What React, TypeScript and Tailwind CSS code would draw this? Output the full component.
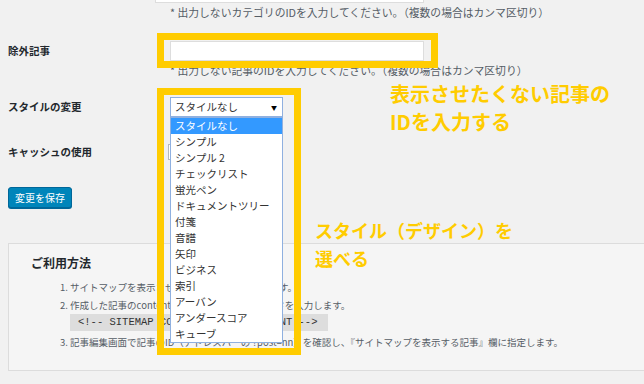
const styles = [
  "スタイルなし",
  "シンプル",
  "シンプル 2",
  "チェックリスト",
  "蛍光ペン",
  "ドキュメントツリー",
  "付箋",
  "音譜",
  "矢印",
  "ビジネス",
  "索引",
  "アーバン",
  "アンダースコア",
  "キューブ",
];

function Label({ children }: { children: React.ReactNode }) {
  return (
    <div className="w-[170px] shrink-0 pl-[8px] text-[10.5px] font-bold leading-[16px] text-[#23282d]">
      {children}
    </div>
  );
}

export default function App() {
  return (
    <div className="relative h-[384px] w-[644px] overflow-hidden bg-[#f1f1f1] font-['Noto_Sans_CJK_JP',sans-serif] text-[#555d66]">
      {/* bottom of the previous field */}
      <div className="ml-[155px] h-[3px] w-[269px] border-x border-b border-[#dddddd] bg-white" />
      <p className="mt-[2px] pl-[170px] text-[10.8px] leading-[14px]">
        * 出力しないカテゴリのIDを入力してください。（複数の場合はカンマ区切り）
      </p>

      <div className="mt-[22px] flex items-center">
        <Label>除外記事</Label>
        <div className="h-[20px] w-[254px] border border-[#dddddd] bg-white" />
      </div>
      <p className="mt-[2px] pl-[170px] text-[10.8px] leading-[14px]">
        * 出力しない記事のIDを入力してください。（複数の場合はカンマ区切り）
      </p>

      <div className="mt-[20px] flex items-center">
        <Label>スタイルの変更</Label>
        <div className="flex h-[20px] w-[113px] items-center justify-between border border-[#8fb0e0] bg-white pl-[4px] pr-[5px] text-[10.5px] text-[#333333]">
          <span className="leading-[16px]">スタイルなし</span>
          <span className="text-[6px] text-black">▼</span>
        </div>
      </div>

      <div className="mt-[27px] flex h-[16px] items-center">
        <Label>キャッシュの使用</Label>
        <div className="-ml-[2px] h-[16px] w-[16px] border border-[#b4b9be] bg-white" />
      </div>

      <button className="ml-[8px] mt-[27px] flex h-[21px] w-[64px] items-center justify-center rounded-[3px] border border-[#006799] bg-[#0085ba] text-[10px] leading-none text-white shadow-[0_1px_0_#006799]">
        変更を保存
      </button>

      <div className="ml-[8px] mt-[35px] h-[128px] w-[700px] border border-[#dcdcdc] bg-[#f5f5f5] pl-[22px] pt-[10px]">
        <h3 className="text-[12px] font-bold leading-[18px] text-[#23282d]">ご利用方法</h3>
        <ol className="mt-[8px] pl-[29px] text-[9.5px] leading-[14px]">
          <li>1. サイトマップを表示させるための記事を作成します。</li>
          <li className="mt-[4px]">2. 作成した記事のcontent編集エリアに以下のコードを入力します。</li>
          <li className="mt-[2px] pl-[10px]">
            <code className="inline-block h-[17px] w-[258px] bg-[#dddddd] pl-[8px] font-['Liberation_Mono',monospace] text-[10.5px] leading-[17px] text-[#333333]">
              {"<!-- SITEMAP CONTENT REPLACE POINT -->"}
            </code>
          </li>
          <li className="mt-[4px]">
            3. 記事編集画面で記事のID（アドレスバーの ?post=nn）を確認し、『サイトマップを表示する記事』欄に指定します。
          </li>
        </ol>
      </div>

      {/* open select list */}
      <ul className="absolute left-[170px] top-[117px] w-[113px] border border-[#8fb0e0] bg-white text-[10.5px] leading-[16px] text-[#333333]">
        {styles.map((s, i) => (
          <li key={s} className={i === 0 ? "bg-[#3399ff] pl-[4px] text-white" : "pl-[4px]"}>
            {s}
          </li>
        ))}
      </ul>

      {/* annotations */}
      <div className="absolute left-[157px] top-[33px] h-[35px] w-[281px] border-[7px] border-[#ffcc00]" />
      <div className="absolute left-[157px] top-[88px] h-[267px] w-[144px] border-[7px] border-[#ffcc00]" />
      <p className="absolute left-[390px] top-[80px] text-[20px] font-bold leading-[28px] text-[#ffcc00]">
        表示させたくない記事の
        <br />
        IDを入力する
      </p>
      <p className="absolute left-[315px] top-[216px] text-[18px] font-bold leading-[28px] text-[#ffcc00]">
        スタイル（デザイン）を
        <br />
        選べる
      </p>
    </div>
  );
}
